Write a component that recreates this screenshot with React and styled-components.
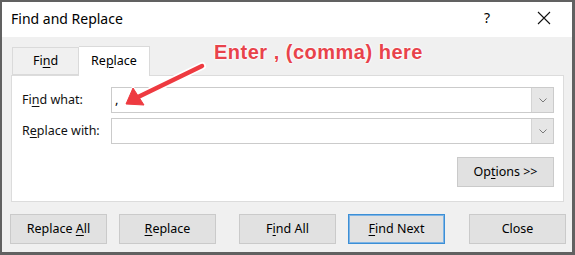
import styled, { createGlobalStyle } from "styled-components";

const Global = createGlobalStyle`
  html, body {
    margin: 0;
    padding: 0;
    background: #ffffff;
  }
  body {
    font-family: "Segoe UI", "Noto Sans", "Open Sans", sans-serif;
    color: #000;
  }
`;

const Window = styled.div`
  position: relative;
  box-sizing: border-box;
  width: 575px;
  height: 255px;
  border-style: solid;
  border-color: #616161;
  border-width: 2px 3px 3px 2px;
  background: #f0f0f0;
  display: flex;
  flex-direction: column;
  overflow: hidden;
`;

const TitleBar = styled.div`
  height: 35px;
  background: #ffffff;
  display: flex;
  align-items: center;
  padding-left: 9px;
  flex-shrink: 0;
`;

const Title = styled.div`
  font-size: 14px;
  flex: 1;
  padding-bottom: 2px;
`;

const Help = styled.div`
  font-size: 14px;
  width: 12px;
  margin-right: 41px;
  padding-bottom: 4px;
`;

const CloseX = styled.svg`
  width: 14px;
  height: 14px;
  margin-right: 21px;
  margin-bottom: 3px;
`;

const Body = styled.div`
  flex: 1;
  display: flex;
  flex-direction: column;
  padding: 9px 6px 0 9px;
`;

const TabRow = styled.div`
  display: flex;
  align-items: flex-end;
  height: 29px;
  padding-left: 1px;
  position: relative;
  z-index: 1;
`;

const Tab = styled.div`
  box-sizing: border-box;
  width: ${(p) => p.$w}px;
  height: ${(p) => (p.$active ? 30 : 28)}px;
  margin-bottom: ${(p) => (p.$active ? -1 : 0)}px;
  display: flex;
  align-items: center;
  justify-content: center;
  font-size: 12.5px;
  background: ${(p) => (p.$active ? "#ffffff" : "#f0f0f0")};
  border: 1px solid #dadada;
  border-bottom: ${(p) => (p.$active ? "none" : "1px solid #dadada")};
  border-left: ${(p) => (p.$first ? "1px solid #dadada" : "none")};
  padding-bottom: ${(p) => (p.$active ? 3 : 1)}px;
`;

const U = styled.span`
  text-decoration: underline;
  text-underline-offset: 2px;
  text-decoration-thickness: 1px;
`;

const Panel = styled.div`
  box-sizing: border-box;
  width: 553px;
  height: 127px;
  background: #ffffff;
  border: 1px solid #dcdcdc;
  padding: 11px 9px 0 10px;
  display: flex;
  flex-direction: column;
`;

const Row = styled.div`
  display: flex;
  align-items: center;
  height: 26px;
  margin-bottom: 5px;
`;

const Label = styled.div`
  width: 89px;
  font-size: 12.5px;
  color: #111;
  padding-bottom: 2px;
`;

const Combo = styled.div`
  box-sizing: border-box;
  flex: 1;
  height: 26px;
  border: 1px solid #cbcbcb;
  display: flex;
  background: #fff;
`;

const Field = styled.div`
  flex: 1;
  font-size: 13px;
  padding-left: 3px;
  line-height: 22px;
`;

const Drop = styled.div`
  width: 21px;
  background: #e6e6e6;
  border-left: 1px solid #d4d4d4;
  display: flex;
  align-items: center;
  justify-content: center;
`;

const OptionsRow = styled.div`
  display: flex;
  justify-content: flex-end;
  margin-top: 8px;
`;

const Button = styled.div`
  box-sizing: border-box;
  width: 97px;
  height: 30px;
  flex-shrink: 0;
  display: flex;
  align-items: center;
  justify-content: center;
  font-size: 12.5px;
  background: #e1e1e1;
  border: 1px solid ${(p) => (p.$primary ? "#3c8fd6" : "#cacaca")};
  box-shadow: ${(p) => (p.$primary ? "inset 0 0 0 1px #7fb4e4" : "none")};
  margin-left: ${(p) => p.$space || 0}px;
  padding-bottom: 2px;
`;

const Footer = styled.div`
  display: flex;
  margin-top: 12px;
  margin-left: -1px;
`;

const Callout = styled.div`
  position: absolute;
  left: 212px;
  top: 39px;
  font-family: "Liberation Sans", Arial, sans-serif;
  font-weight: bold;
  font-size: 20px;
  letter-spacing: 0.5px;
  color: #e8434b;
  white-space: nowrap;
  text-shadow: 0 0 2px #fff, 0 0 2px #fff, 0 0 3px #fff;
  z-index: 3;
`;

const ArrowSvg = styled.svg`
  position: absolute;
  left: 0;
  top: 0;
  width: 575px;
  height: 255px;
  pointer-events: none;
  z-index: 3;
`;

const Chevron = () => (
  <svg width="8" height="5" viewBox="0 0 8 5">
    <path d="M0.5 0.5 L4 4 L7.5 0.5" fill="none" stroke="#7a7a7a" strokeWidth="1" />
  </svg>
);

export default function App() {
  return (
    <>
      <Global />
      <Window>
        <TitleBar>
          <Title>Find and Replace</Title>
          <Help>?</Help>
          <CloseX viewBox="0 0 14 14">
            <path d="M1 1 L13 13 M13 1 L1 13" stroke="#111" strokeWidth="1.1" />
          </CloseX>
        </TitleBar>
        <Body>
          <TabRow>
            <Tab $w={67} $first>
              <span>
                Fi<U>n</U>d
              </span>
            </Tab>
            <Tab $w={71} $active>
              <span>
                Re<U>p</U>lace
              </span>
            </Tab>
          </TabRow>
          <Panel>
            <Row>
              <Label>
                Fi<U>n</U>d what:
              </Label>
              <Combo>
                <Field>,</Field>
                <Drop>
                  <Chevron />
                </Drop>
              </Combo>
            </Row>
            <Row>
              <Label>
                R<U>e</U>place with:
              </Label>
              <Combo>
                <Field />
                <Drop>
                  <Chevron />
                </Drop>
              </Combo>
            </Row>
            <OptionsRow>
              <Button>
                <span>
                  Op<U>t</U>ions &gt;&gt;
                </span>
              </Button>
            </OptionsRow>
          </Panel>
          <Footer>
            <Button>
              <span>
                Replace <U>A</U>ll
              </span>
            </Button>
            <Button $space={12}>
              <span>
                <U>R</U>eplace
              </span>
            </Button>
            <Button $space={23}>
              <span>
                F<U>i</U>nd All
              </span>
            </Button>
            <Button $space={12} $primary>
              <span>
                <U>F</U>ind Next
              </span>
            </Button>
            <Button $space={24}>Close</Button>
          </Footer>
        </Body>
        <Callout>Enter , (comma) here</Callout>
        <ArrowSvg viewBox="0 0 575 255">
          <g>
            <line x1="200" y1="64" x2="134" y2="96" stroke="#fff" strokeWidth="8" strokeLinecap="round" />
            <polygon points="124,102 131,86 142,103" fill="#fff" stroke="#fff" strokeWidth="3" strokeLinejoin="round" />
            <line x1="200" y1="64" x2="134" y2="96" stroke="#ee3a40" strokeWidth="4.5" strokeLinecap="round" />
            <polygon points="124,102 131,86 142,103" fill="#ee3a40" stroke="#ee3a40" strokeWidth="1" strokeLinejoin="round" />
          </g>
        </ArrowSvg>
      </Window>
    </>
  );
}
